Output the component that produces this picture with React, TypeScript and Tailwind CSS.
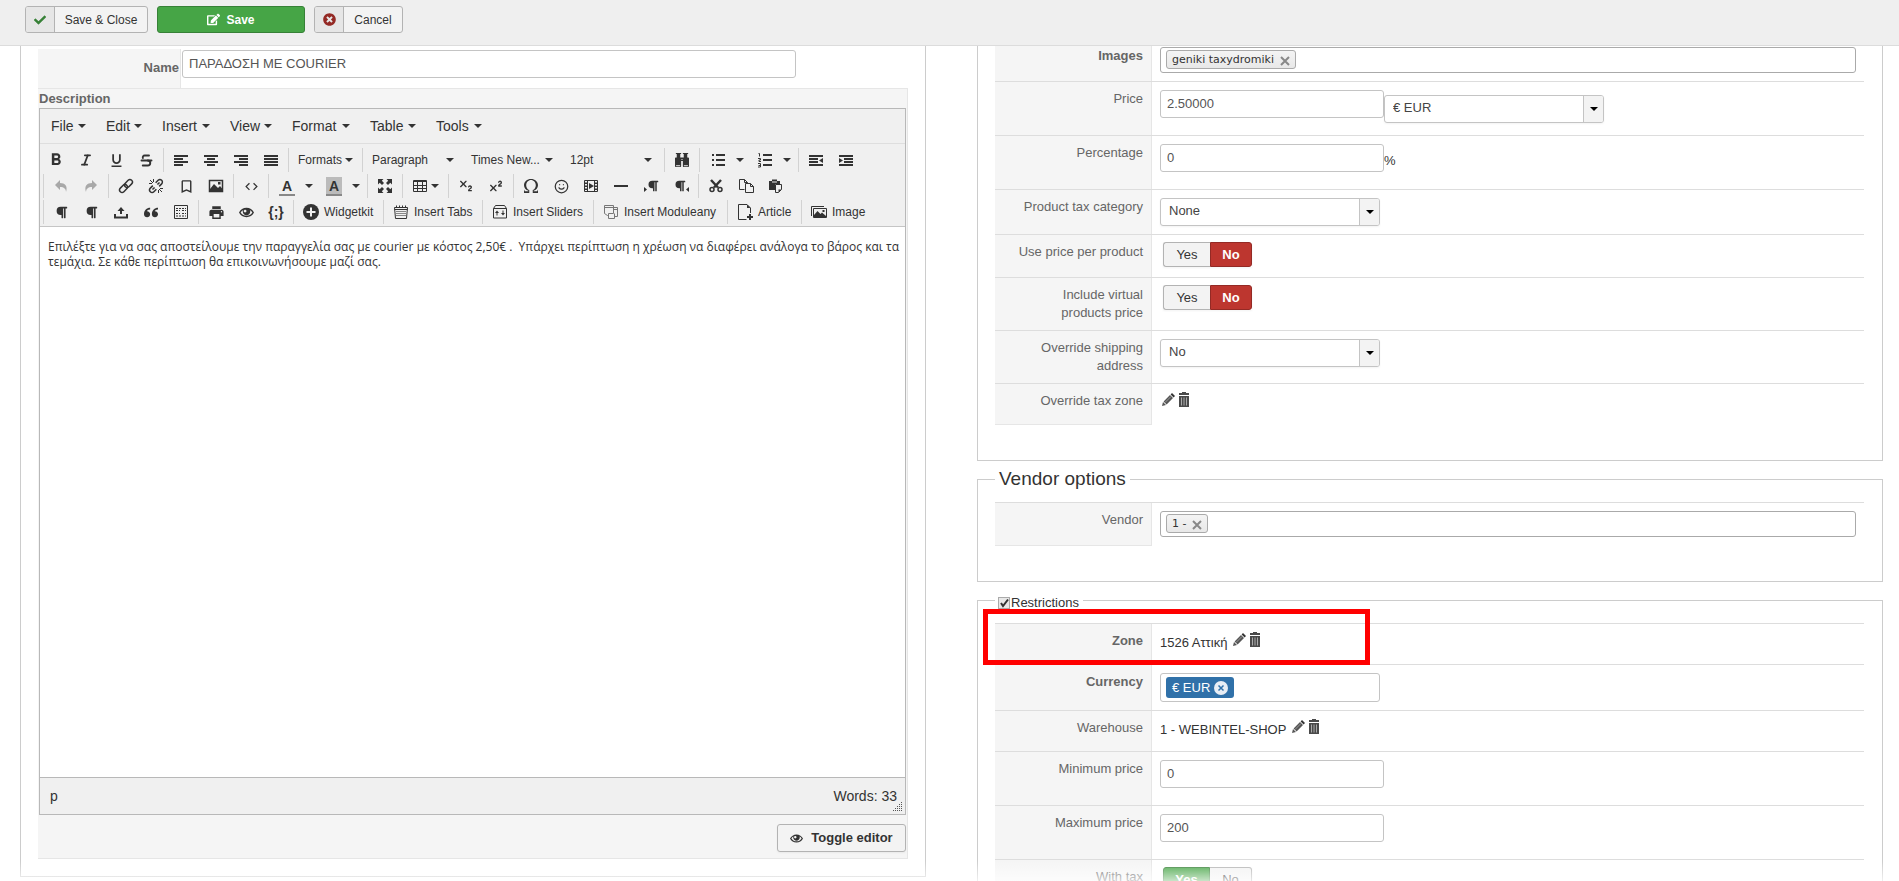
import type { ReactNode } from 'react';
import clsx from 'clsx';
import { ImBinoculars, ImEye, ImOmega, ImQuotesLeft } from 'react-icons/im';
import { MdBookmarkBorder, MdCode, MdFormatBold, MdFormatUnderlined, MdPrint } from 'react-icons/md';
import { FaCheck, FaEdit, FaParagraph, FaTimesCircle } from 'react-icons/fa';
import { Italic, Smile, Strikethrough, Subscript, Superscript } from 'lucide-react';

const Caret = ({ className }: { className?: string }) => (
  <svg width="8" height="4" viewBox="0 0 8 4" className={clsx('shrink-0', className)} fill="currentColor">
    <path d="M0 0h8L4 4z" />
  </svg>
);

const Svg = ({ children, size = 16 }: { children: ReactNode; size?: number }) => (
  <svg width={size} height={size} viewBox="0 0 16 16" fill="currentColor" className="shrink-0">
    {children}
  </svg>
);

const stroke = { fill: 'none', stroke: 'currentColor' };

const AlignLeft = () => <Svg><path d="M1 3h14v2H1zM1 6h9v2H1zM1 9h14v2H1zM1 12h9v2H1z" /></Svg>;
const AlignCenter = () => <Svg><path d="M1 3h14v2H1zM4 6h8v2H4zM1 9h14v2H1zM4 12h8v2H4z" /></Svg>;
const AlignRight = () => <Svg><path d="M1 3h14v2H1zM6 6h9v2H6zM1 9h14v2H1zM6 12h9v2H6z" /></Svg>;
const Justify = () => <Svg><path d="M1 3h14v2H1zM1 6h14v2H1zM1 9h14v2H1zM1 12h14v2H1z" /></Svg>;
const Outdent = () => <Svg><path d="M1 3h14v2H1zM1 6h9v2H1zM1 9h9v2H1zM1 12h14v2H1zM15 6v5l-4-2.5z" /></Svg>;
const Indent = () => <Svg><path d="M1 3h14v2H1zM6 6h9v2H6zM6 9h9v2H6zM1 12h14v2H1zM1 6v5l4-2.5z" /></Svg>;
const Bullets = () => <Svg><path d="M2 2h2v2H2zM6 2h9v2H6zM2 7h2v2H2zM6 7h9v2H6zM2 12h2v2H2zM6 12h9v2H6z" /></Svg>;
const Numbers = () => (
  <Svg>
    <path d="M6 2h9v2H6zM6 7h9v2H6zM6 12h9v2H6z" />
    <path {...stroke} d="M1.500 1.500h1v3M1 6.500h2.500v1.500h-1.500v1.500h2M1 11.500h2.500v3.500h-2.500M1.500 13.500h2" />
  </Svg>
);
const Undo = () => <Svg><path d="M7 2v3c5 0 8 3 6 9 0-3-2-5-6-5v3L2 7z" /></Svg>;
const Redo = () => <Svg><path d="M9 2v3c-5 0-8 3-6 9 0-3 2-5 6-5v3l5-5z" /></Svg>;
const Chain = () => (
  <Svg>
    <g transform="rotate(-45 8 8)" {...stroke} strokeWidth="1.5">
      <rect x="0" y="5.500" width="9" height="5" rx="2.500" />
      <rect x="7" y="5.500" width="9" height="5" rx="2.500" />
    </g>
  </Svg>
);
const Unchain = () => (
  <Svg>
    <g transform="rotate(-45 8 8)" {...stroke} strokeWidth="1.5">
      <path d="M6 5.500H2.500a2.500 2.500 0 0 0 0 5H6M10 5.500h3.500a2.500 2.500 0 0 1 0 5H10M3 8h3M10 8h3" />
    </g>
    <path {...stroke} d="M2 2l3 3M5.500 1v3M1 5.500h3M14 14l-3-3M10.500 15v-3M15 10.500h-3" />
  </Svg>
);
const Picture = () => (
  <Svg>
    <path {...stroke} strokeWidth="1.500" d="M1.500 2.500h13v11h-13z" />
    <path d="M2 13V11l4-5 4 4 2-2 2.500 3v2zM10 4h2.500v2.500H10z" />
  </Svg>
);
const Fullscreen = () => (
  <Svg>
    <path d="M1 1h5.500L4.800 2.700 7 5 5 7 2.700 4.800 1 6.500zM15 1v5.500l-1.700-1.700L11 7 9 5l2.200-2.300L9.500 1zM1 15V9.500l1.700 1.700L5 9l2 2-2.200 2.300L6.500 15zM15 15H9.500l1.700-1.700L9 11l2-2 2.300 2.200L15 9.500z" />
  </Svg>
);
const TableGrid = () => (
  <Svg><path {...stroke} d="M1.500 2.500h13v11h-13zM1.500 3.500h13M1.500 7.500h13M1.500 10.500h13M5.500 3v10.500M10.500 3v10.500" /></Svg>
);
const Film = () => (
  <Svg>
    <path {...stroke} d="M1.500 2.500h13v11h-13zM4.500 2.500v11M11.500 2.500v11" />
    <path d="M6 5l5 3-5 3zM1 4.500h3v1.500H1zM1 7.500h3v1.500H1zM1 10.500h3V12H1zM12 4.500h3v1.500h-3zM12 7.500h3v1.500h-3zM12 10.500h3V12h-3z" />
  </Svg>
);
const Rule = () => <Svg><path d="M1 7h14v2H1z" /></Svg>;
const Cut = () => (
  <Svg>
    <path d="M3 2l7 7.500M13 2L6 9.500" {...stroke} strokeWidth="2.500" />
    <circle cx="4" cy="11.500" r="2" {...stroke} strokeWidth="1.500" />
    <circle cx="12" cy="11.500" r="2" {...stroke} strokeWidth="1.500" />
  </Svg>
);
const Copy = () => (
  <Svg>
    <path {...stroke} d="M6.500 11.500h-5v-10h5l3 3v1M6.500 1.500v3h3M7.500 5.500h5l3 3v6h-8zM12.500 5.500v3h3" />
  </Svg>
);
const Paste = () => (
  <Svg>
    <path d="M1 3h3V1.500h5V3h3v3H7v6H1z" />
    <path d="M4 4h5" stroke="#f0f0f0" fill="none" />
    <path d="M7.500 6.500h6v5l-3 3h-3z" fill="#f0f0f0" stroke="currentColor" />
    <path d="M10.500 14.500v-3h3z" />
  </Svg>
);
const Upload = () => (
  <Svg><path d="M7 10V7H4.500L8 3l3.500 4H9v3zM1 10h2v2.500h10V10h2v4.500H1z" /></Svg>
);
const Template = () => (
  <Svg>
    <path {...stroke} d="M1.500 1.500h13v13h-13z" />
    <path {...stroke} strokeDasharray="2 1" d="M3 4.500h10M3 6.500h4M9 6.500h4M3 9.500h4M9 9.500h4M3 12h10" />
  </Svg>
);
const PlusDisc = () => (
  <Svg>
    <circle cx="8" cy="8" r="8" />
    <path d="M3.500 7H7V3.500h2V7h3.500v2H9v3.500H7V9H3.500z" fill="#f0f0f0" />
  </Svg>
);
const TabsIcon = () => (
  <Svg>
    <path {...stroke} d="M1.500 3.500h13l-1 11h-11zM1.500 5.500h13M3.500 1.500v2M6.500 1.500v2M9.500 1.500v2M12.500 1.500v2" />
    <path {...stroke} stroke="#888" d="M3 7.500h10M3 9.500h10M3 11.500h10" />
  </Svg>
);
const SlidersIcon = () => (
  <Svg>
    <path {...stroke} d="M3.500 1.500h9l2 3v9.500h-13V4.500zM1.500 4.500h13" />
    <path d="M5 6.500l2 2.500H5.500v2.500h-1V9H3zM11 11.500L9 9h1.500V6.500h1V9H13z" />
  </Svg>
);
const ModulesIcon = () => (
  <Svg>
    <path {...stroke} stroke="#777" d="M5.500 11.500h-1l-3-2v-8h9v8h-5M1.500 3.500h9M10.500 3.500h4v9h-3M10.500 5.500h4M5.500 9.500v5h6v-5" />
  </Svg>
);
const ArticleIcon = () => (
  <Svg>
    <path {...stroke} d="M9.500 15.500h-8V.5h8.500l3.500 3.500v5" />
    <path d="M10 .5V4h3.500zM12 10h2v2h2v2h-2v2h-2v-2h-2v-2h2z" />
  </Svg>
);
const ImagesIcon = () => (
  <Svg>
    <path {...stroke} d="M.5 12V2.500H13M2.500 4.500h13v9h-13z" />
    <path d="M3 13v-2l3.500-4 3 3L11 8.500l4 3.500v1zM11.500 6h2v2h-2z" />
  </Svg>
);

const Pencil = () => (
  <svg width="14" height="14" viewBox="0 0 14 14" className="shrink-0">
    <path d="M1 13l1-4 3 3zM2.600 8.400L9 2l3 3-6.400 6.400z" fill="#555" />
    <path d="M9.600 1.400L11 0l3 3-1.400 1.400z" fill="#333" />
    <path d="M4 9.500L10 3.500" stroke="#999" fill="none" />
  </svg>
);
const Trash = () => (
  <svg width="10" height="15" viewBox="0 0 10 15" className="shrink-0">
    <path d="M0 1h3V0h4v1h3v2H0zM0 4h10v11H0z" fill="#4a4a4a" />
    <path d="M2.500 5.500v8M5 5.500v8M7.500 5.500v8" stroke="#aaa" fill="none" />
  </svg>
);

const RowActions = () => (
  <span className="flex gap-1 pl-px">
    <button type="button" aria-label="Edit"><Pencil /></button>
    <button type="button" aria-label="Delete"><Trash /></button>
  </span>
);

const Group = ({ children, first }: { children: ReactNode; first?: boolean }) => (
  <div className={clsx('flex h-6 items-center', !first && 'ml-0.5 border-l border-[#d2d2d2] pl-0.5')}>{children}</div>
);

const Tool = ({ label, children, muted }: { label: string; children: ReactNode; muted?: boolean }) => (
  <button
    type="button"
    aria-label={label}
    className={clsx('flex h-6 w-[30px] items-center justify-center', muted && 'text-[#a8a8a8]')}
  >
    {children}
  </button>
);

const SplitTool = ({ label, children }: { label: string; children: ReactNode }) => (
  <div className="flex h-6 w-[47px] items-center">
    <button type="button" aria-label={label} className="flex w-8 justify-center">{children}</button>
    <button type="button" aria-label={`${label} options`} className="flex h-6 w-3 items-center justify-center">
      <Caret />
    </button>
  </div>
);

const ListTool = ({ children }: { children: ReactNode }) => (
  <button type="button" className="flex h-6 w-[99px] items-center justify-between pr-2.5 pl-[7px] text-xs">
    {children}
    <Caret />
  </button>
);

const TextTool = ({ icon, width, children }: { icon: ReactNode; width: string; children: ReactNode }) => (
  <button type="button" className={clsx('flex h-6 items-center gap-[5px] pl-[7px] text-xs whitespace-nowrap', width)}>
    {icon}
    {children}
  </button>
);

const ColorTool = ({ filled }: { filled?: boolean }) => (
  <span
    className={clsx(
      'flex h-[19px] w-4 items-start justify-center border-b-2 border-[#888] text-sm leading-[18px] font-bold',
      filled && 'bg-[#bbb]',
    )}
  >
    A
  </span>
);

const menus = [
  { label: 'File', width: 'w-[55px]' },
  { label: 'Edit', width: 'w-[56px]' },
  { label: 'Insert', width: 'w-[68px]' },
  { label: 'View', width: 'w-[62px]' },
  { label: 'Format', width: 'w-[78px]' },
  { label: 'Table', width: 'w-[66px]' },
  { label: 'Tools', width: 'w-[66px]' },
];

const Editor = () => (
  <div className="border border-[#b8b8b8] bg-white text-[#333]">
    <div className="flex h-[35px] items-center border-b border-[#dedede] bg-[#f0f0f0] pl-px">
      {menus.map((menu) => (
        <button
          key={menu.label}
          type="button"
          className={clsx('flex items-center justify-between pr-2.5 pl-2.5 text-sm', menu.width)}
        >
          {menu.label}
          <Caret />
        </button>
      ))}
    </div>
    <div className="flex flex-col gap-0.5 border-b border-[#c5c5c5] bg-[#f0f0f0] pt-1 pb-0.5 pl-px">
      <div className="flex">
        <Group first>
          <Tool label="Bold"><MdFormatBold size={20} /></Tool>
          <Tool label="Italic"><Italic size={14} strokeWidth={3} /></Tool>
          <Tool label="Underline"><MdFormatUnderlined size={17} /></Tool>
          <Tool label="Strikethrough"><Strikethrough size={15} strokeWidth={3} /></Tool>
        </Group>
        <Group>
          <Tool label="Align left"><AlignLeft /></Tool>
          <Tool label="Align center"><AlignCenter /></Tool>
          <Tool label="Align right"><AlignRight /></Tool>
          <Tool label="Justify"><Justify /></Tool>
        </Group>
        <Group>
          <button type="button" className="flex h-6 w-[69px] items-center justify-between px-[7px] text-xs">
            Formats
            <Caret />
          </button>
        </Group>
        <Group>
          <ListTool>Paragraph</ListTool>
          <ListTool>Times New...</ListTool>
          <ListTool>12pt</ListTool>
        </Group>
        <Group>
          <Tool label="Find and replace"><ImBinoculars size={14} /></Tool>
        </Group>
        <Group>
          <SplitTool label="Bullet list"><Bullets /></SplitTool>
          <SplitTool label="Numbered list"><Numbers /></SplitTool>
        </Group>
        <Group>
          <Tool label="Decrease indent"><Outdent /></Tool>
          <Tool label="Increase indent"><Indent /></Tool>
        </Group>
      </div>
      <div className="flex">
        <Group>
          <Tool label="Undo" muted><Undo /></Tool>
          <Tool label="Redo" muted><Redo /></Tool>
        </Group>
        <Group>
          <Tool label="Insert link"><Chain /></Tool>
          <Tool label="Remove link"><Unchain /></Tool>
          <Tool label="Anchor"><MdBookmarkBorder size={17} /></Tool>
          <Tool label="Insert image"><Picture /></Tool>
        </Group>
        <Group>
          <Tool label="Source code"><MdCode size={15} /></Tool>
        </Group>
        <Group>
          <SplitTool label="Text color"><ColorTool /></SplitTool>
          <SplitTool label="Background color"><ColorTool filled /></SplitTool>
        </Group>
        <Group>
          <Tool label="Fullscreen"><Fullscreen /></Tool>
        </Group>
        <Group>
          <button type="button" aria-label="Table" className="flex h-6 items-center gap-[3px] px-[7px]">
            <TableGrid />
            <Caret />
          </button>
        </Group>
        <Group>
          <Tool label="Subscript"><Subscript size={16} /></Tool>
          <Tool label="Superscript"><Superscript size={16} /></Tool>
        </Group>
        <Group>
          <Tool label="Special character"><ImOmega size={14} /></Tool>
          <Tool label="Emoticons"><Smile size={15} /></Tool>
          <Tool label="Insert video"><Film /></Tool>
          <Tool label="Horizontal line"><Rule /></Tool>
          <Tool label="Left to right">
            <svg width="3" height="5" viewBox="0 0 3 5" fill="currentColor" className="mt-1.5"><path d="M0 0l3 2.500L0 5z" /></svg>
            <FaParagraph size={12} />
          </Tool>
          <Tool label="Right to left">
            <FaParagraph size={12} />
            <svg width="3" height="5" viewBox="0 0 3 5" fill="currentColor" className="mt-1.5"><path d="M3 0L0 2.500 3 5z" /></svg>
          </Tool>
        </Group>
        <Group>
          <Tool label="Cut"><Cut /></Tool>
          <Tool label="Copy"><Copy /></Tool>
          <Tool label="Paste"><Paste /></Tool>
        </Group>
      </div>
      <div className="flex">
        <Group>
          <Tool label="Show blocks"><FaParagraph size={13} /></Tool>
          <Tool label="Show invisible characters"><FaParagraph size={13} /></Tool>
          <Tool label="Nonbreaking space"><Upload /></Tool>
          <Tool label="Blockquote"><ImQuotesLeft size={14} /></Tool>
          <Tool label="Insert template"><Template /></Tool>
        </Group>
        <Group>
          <Tool label="Print"><MdPrint size={17} /></Tool>
          <Tool label="Preview"><ImEye size={15} /></Tool>
          <Tool label="Code sample"><span className="text-sm font-bold">{'{;}'}</span></Tool>
        </Group>
        <Group><TextTool width="w-[85px]" icon={<PlusDisc />}>Widgetkit</TextTool></Group>
        <Group><TextTool width="w-[94px]" icon={<TabsIcon />}>Insert Tabs</TextTool></Group>
        <Group><TextTool width="w-[106px]" icon={<SlidersIcon />}>Insert Sliders</TextTool></Group>
        <Group><TextTool width="w-[129px]" icon={<ModulesIcon />}>Insert Moduleany</TextTool></Group>
        <Group><TextTool width="w-[69px]" icon={<ArticleIcon />}>Article</TextTool></Group>
        <Group><TextTool width="w-[69px]" icon={<ImagesIcon />}>Image</TextTool></Group>
      </div>
    </div>
    <div
      role="textbox"
      aria-label="Description"
      aria-multiline="true"
      className="h-[550px] py-3 pr-1 pl-2 font-['Open_Sans','Noto_Sans',sans-serif] text-xs leading-[15px]"
    >
      <p>
        Επιλέξτε για να σας αποστείλουμε την παραγγελία σας με courier με κόστος 2,50€ .&nbsp; Υπάρχει περίπτωση η
        χρέωση να διαφέρει ανάλογα το βάρος και τα τεμάχια. Σε κάθε περίπτωση θα επικοινωνήσουμε μαζί σας.
      </p>
    </div>
    <div className="relative flex h-[37px] items-center justify-between border-t border-[#b8b8b8] bg-[#f0f0f0] px-2.5 pr-2 text-sm">
      <span>p</span>
      <span>Words: 33</span>
      <svg width="10" height="10" viewBox="0 0 10 10" fill="#555" className="absolute right-0.5 bottom-0.5">
        <path d="M8 0h1v1H8zM6 2h1v1H6zM8 2h1v1H8zM4 4h1v1H4zM6 4h1v1H6zM8 4h1v1H8zM2 6h1v1H2zM4 6h1v1H4zM6 6h1v1H6zM8 6h1v1H8zM0 8h1v1H0zM2 8h1v1H2zM4 8h1v1H4zM6 8h1v1H6zM8 8h1v1H8z" />
      </svg>
    </div>
  </div>
);

type RowProps = {
  label: string;
  htmlFor?: string;
  bold?: boolean;
  height: string;
  className?: string;
  last?: boolean;
  children: ReactNode;
};

const Row = ({ label, htmlFor, bold, height, className = 'pt-2', last, children }: RowProps) => (
  <div className={clsx('flex border-t border-[#ddd]', height)}>
    <div
      className={clsx(
        'flex w-[157px] shrink-0 justify-end border-r border-[#e6e6e6] bg-[#f5f5f5] pt-2 pr-2 pl-4 text-right text-[#666]',
        bold && 'font-bold',
        last && 'border-b',
      )}
    >
      <label htmlFor={htmlFor} className="leading-[18px]">{label}</label>
    </div>
    <div className={clsx('flex min-w-0 flex-1 items-start px-2', className)}>{children}</div>
  </div>
);

const TextInput = ({ id, value }: { id: string; value: string }) => (
  <input
    id={id}
    type="text"
    defaultValue={value}
    className="h-7 w-56 rounded-[3px] border border-[#c4c4c4] bg-white px-1.5 pb-0.5 text-[#555]"
  />
);

const Select = ({ id, value, label }: { id: string; value: string; label?: string }) => (
  <div className="relative w-[220px]">
    <select
      id={id}
      aria-label={label}
      className="h-7 w-full appearance-none rounded-[3px] border border-[#c4c4c4] bg-white pr-6 pb-0.5 pl-2 text-[#444] shadow-xs"
    >
      <option>{value}</option>
    </select>
    <span className="pointer-events-none absolute inset-y-px right-px flex w-5 items-center justify-center rounded-r-[2px] border-l border-[#c4c4c4] bg-[#f3f3f3] text-black">
      <Caret />
    </span>
  </div>
);

const YesNo = ({ name, value }: { name: string; value: 'yes' | 'no' }) => (
  <div role="radiogroup" aria-label={name} className="ml-[3px] flex h-[25px] leading-[23px] shadow-xs">
    <label
      className={clsx(
        'relative w-[47px] rounded-l-[3px] border text-center',
        value === 'yes' ? 'border-[#378137] bg-[#46a546] font-bold text-white' : 'border-r-0 border-[#b3b3b3] bg-[#f3f3f3] text-[#333]',
      )}
    >
      <input type="radio" name={name} defaultChecked={value === 'yes'} className="sr-only" />
      Yes
    </label>
    <label
      className={clsx(
        'relative w-[42px] rounded-r-[3px] border text-center',
        value === 'no' ? 'border-[#942a25] bg-[#bd362f] font-bold text-white' : 'border-l-0 border-[#b3b3b3] bg-[#f3f3f3] text-[#333]',
      )}
    >
      <input type="radio" name={name} defaultChecked={value === 'no'} className="sr-only" />
      No
    </label>
  </div>
);

const TagBox = ({ tag }: { tag: string }) => (
  <div className="flex h-[26px] w-full items-start rounded-[3px] border border-[#aaa] bg-white px-[5px] pt-0.5">
    <span className="flex h-[19px] items-center gap-1.5 rounded-[3px] border border-[#aaa] bg-linear-to-b from-[#f4f4f4] to-[#e8e8e8] px-[5px] font-['DejaVu_Sans',sans-serif] text-[11px] text-[#333]">
      {tag}
      <button type="button" aria-label={`Remove ${tag}`} className="pt-0.5">
        <svg width="10" height="10" viewBox="0 0 10 10" stroke="#888" strokeWidth="2" fill="none">
          <path d="M1 1l8 8M9 1L1 9" />
        </svg>
      </button>
    </span>
  </div>
);

const panel = 'min-w-0 border border-[#ccc] pl-[17px]';

export default function App() {
  return (
    <div className="relative flex h-screen flex-col overflow-hidden bg-white font-['Liberation_Sans',Arial,sans-serif] text-[13px] leading-[18px] text-[#333]">
      <header className="flex h-[46px] shrink-0 items-start gap-[9px] border-b border-[#dcdcdc] bg-[#efefef] px-[25px] pt-1.5 text-xs">
        <button type="button" className="flex h-[27px] items-stretch overflow-hidden rounded-[3px] border border-[#b3b3b3] bg-[#f3f3f3]">
          <span className="flex w-[29px] items-center justify-center border-r border-[#b3b3b3] bg-[#e6e6e6] text-[#378137]">
            <FaCheck size={12} />
          </span>
          <span className="flex w-[92px] items-center justify-center">Save &amp; Close</span>
        </button>
        <button
          type="button"
          className="flex h-[27px] w-[148px] items-center justify-center gap-1.5 rounded-[3px] border border-[#378137] bg-[#46a546] font-bold text-white"
        >
          <FaEdit size={13} />
          Save
        </button>
        <button type="button" className="flex h-[27px] items-stretch overflow-hidden rounded-[3px] border border-[#b3b3b3] bg-[#f3f3f3]">
          <span className="flex w-[29px] items-center justify-center border-r border-[#b3b3b3] bg-[#e6e6e6] text-[#942a25]">
            <FaTimesCircle size={13} />
          </span>
          <span className="flex w-[58px] items-center justify-center">Cancel</span>
        </button>
      </header>

      <main className="grid min-h-0 flex-1 grid-cols-2 items-start gap-[51px] overflow-hidden pr-4 pl-5">
        <section className={clsx(panel, 'border-t-0 pt-[3px] pr-[17px] pb-[17px]')}>
          <div className="flex h-10 border-b border-[#e6e6e6]">
            <label htmlFor="name" className="w-[143px] border-r border-[#e6e6e6] bg-[#f5f5f5] pt-2.5 pr-px text-right font-bold text-[#666]">
              Name
            </label>
            <div className="flex-1 pt-px pl-px">
              <input
                id="name"
                type="text"
                defaultValue="ΠΑΡΑΔΟΣΗ ΜΕ COURIER"
                className="h-7 w-[614px] max-w-full rounded-[3px] border border-[#c4c4c4] bg-white px-1.5 pb-0.5 text-[#555]"
              />
            </div>
          </div>
          <div className="border-r border-b border-[#e6e6e6] bg-[#f5f5f5] pr-px pb-1.5 pl-px">
            <h2 className="h-[19px] pt-px font-bold text-[#666]">Description</h2>
            <Editor />
            <div className="flex justify-end pt-[9px]">
              <button
                type="button"
                className="flex h-7 w-[129px] items-center justify-center gap-2 rounded-[3px] border border-[#b3b3b3] bg-[#f3f3f3] font-bold shadow-xs"
              >
                <ImEye size={13} />
                Toggle editor
              </button>
            </div>
          </div>
        </section>

        <div className="flex min-w-0 flex-col">
          <section className={clsx(panel, 'border-t-0 pr-[18px] pb-[35px]')}>
            <div className="-mt-2">
              <Row label="Images" bold height="min-h-[43px]">
                <TagBox tag="geniki taxydromiki" />
              </Row>
              <Row label="Price" htmlFor="price" height="min-h-[54px]">
                <TextInput id="price" value="2.50000" />
                <div className="pt-[5px]">
                  <Select id="price-currency" label="Price currency" value="€ EUR" />
                </div>
              </Row>
              <Row label="Percentage" htmlFor="percentage" height="min-h-[54px]">
                <TextInput id="percentage" value="0" />
                <span className="pt-2">%</span>
              </Row>
              <Row label="Product tax category" htmlFor="tax" height="min-h-[45px]">
                <Select id="tax" value="None" />
              </Row>
              <Row label="Use price per product" height="min-h-[43px]" className="pt-[7px]">
                <YesNo name="Use price per product" value="no" />
              </Row>
              <Row label="Include virtual products price" height="min-h-[53px]" className="pt-[7px]">
                <YesNo name="Include virtual products price" value="no" />
              </Row>
              <Row label="Override shipping address" htmlFor="override" height="min-h-[53px]">
                <Select id="override" value="No" />
              </Row>
              <Row label="Override tax zone" height="min-h-[42px]" last>
                <RowActions />
              </Row>
            </div>
          </section>

          <fieldset className={clsx(panel, 'mt-1 pr-[18px] pb-[35px]')}>
            <legend className="px-1 text-[19px] leading-7">Vendor options</legend>
            <div className="pt-[9px]">
              <Row label="Vendor" height="min-h-[44px]" last>
                <TagBox tag="1 -" />
              </Row>
            </div>
          </fieldset>

          <fieldset className={clsx(panel, 'relative mt-1.5 pr-[18px]')}>
            <legend className="px-[3px] pt-1.5">
              <label className="relative flex items-center gap-px pr-px">
                <input type="checkbox" defaultChecked className="size-3 appearance-none border border-[#aaa] bg-[#e8e8e8]" />
                <svg width="12" height="12" viewBox="0 0 12 12" className="pointer-events-none absolute left-0" fill="none" stroke="#333" strokeWidth="2">
                  <path d="M3 6l2 3 5-6.500" />
                </svg>
                Restrictions
              </label>
            </legend>
            <div className="pt-[11px]">
              <Row label="Zone" bold height="min-h-[41px]">
                <span className="pt-0.5 pr-1">1526 Αττική</span>
                <RowActions />
              </Row>
              <Row label="Currency" bold height="min-h-[46px]">
                <div className="flex h-[29px] w-[220px] items-start rounded-[3px] border border-[#c4c4c4] px-[5px] pt-[3px]">
                  <span className="flex h-[21px] items-center gap-1 rounded-[3px] bg-[#3071a9] px-1.5 text-white">
                    € EUR
                    <button type="button" aria-label="Remove € EUR">
                      <svg width="14" height="14" viewBox="0 0 14 14">
                        <circle cx="7" cy="7" r="7" fill="#e8eef5" />
                        <path d="M4.500 4.500l5 5M9.500 4.500l-5 5" stroke="#3071a9" strokeWidth="1.500" />
                      </svg>
                    </button>
                  </span>
                </div>
              </Row>
              <Row label="Warehouse" height="min-h-[41px]">
                <span className="pt-0.5 pr-1">1 - WEBINTEL-SHOP</span>
                <RowActions />
              </Row>
              <Row label="Minimum price" htmlFor="min-price" height="min-h-[54px]">
                <TextInput id="min-price" value="0" />
              </Row>
              <Row label="Maximum price" htmlFor="max-price" height="min-h-[54px]">
                <TextInput id="max-price" value="200" />
              </Row>
              <Row label="With tax" height="min-h-[43px]" className="pt-[7px]">
                <YesNo name="With tax" value="yes" />
              </Row>
            </div>
            {/* highlight around the zone row */}
            <div className="pointer-events-none absolute -top-[3px] left-[5px] h-14 w-[387px] border-[5px] border-[#f00]" />
          </fieldset>
        </div>
      </main>
      <div className="pointer-events-none absolute inset-x-0 bottom-0 h-5 bg-linear-to-b from-transparent to-white/70" />
    </div>
  );
}
